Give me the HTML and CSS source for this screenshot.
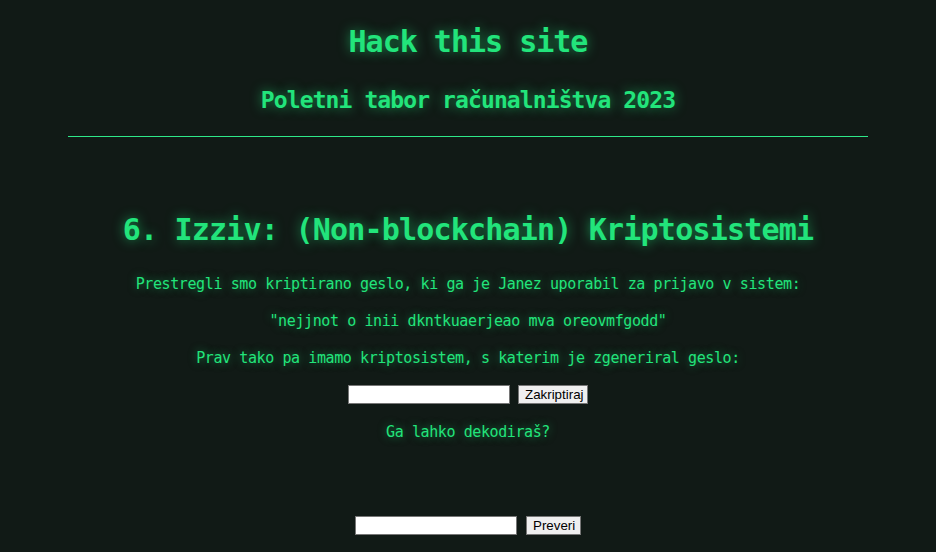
FILE: index.html
```html
<!DOCTYPE html>
<html lang="sl">
<head>
<meta charset="utf-8">
<title>Hack this site</title>
<link rel="stylesheet" href="styles.css">
</head>
<body>
<header class="site-header">
  <h1 class="site-title">Hack this site</h1>
  <h2 class="site-subtitle">Poletni tabor računalništva 2023</h2>
  <hr class="divider">
</header>
<main class="challenge">
  <h1 class="challenge-title">6. Izziv: (Non-blockchain) Kriptosistemi</h1>
  <p class="text">Prestregli smo kriptirano geslo, ki ga je Janez uporabil za prijavo v sistem:</p>
  <p class="text">"nejjnot o inii dkntkuaerjeao mva oreovmfgodd"</p>
  <p class="text">Prav tako pa imamo kriptosistem, s katerim je zgeneriral geslo:</p>
  <form class="row row-encrypt" onsubmit="return false">
    <input class="field" type="text">
    <button class="btn btn-encrypt" type="button">Zakriptiraj</button>
  </form>
  <p class="text">Ga lahko dekodiraš?</p>
  <form class="row row-check" onsubmit="return false">
    <input class="field" type="text">
    <button class="btn btn-check" type="button">Preveri</button>
  </form>
</main>
</body>
</html>
```
FILE: styles.css
```css
html, body {
  margin: 0;
  padding: 0;
}
body {
  background: #111a16;
  color: #22e47b;
  font-family: "DejaVu Sans Mono", "Liberation Mono", monospace;
  text-align: center;
  height: 552px;
  overflow: hidden;
}
.site-header {
  padding-top: 22px;
}
.site-title {
  margin: 0;
  font-size: 30px;
  line-height: 40px;
  letter-spacing: -1px;
  font-weight: bold;
  text-shadow: 0 0 12px rgba(34, 228, 123, 0.6);
}
.site-subtitle {
  margin: 23px 0 0;
  font-size: 23px;
  line-height: 30px;
  letter-spacing: -0.9px;
  font-weight: bold;
  text-shadow: 0 0 12px rgba(34, 228, 123, 0.6);
}
.divider {
  width: 800px;
  margin: 21px auto 0;
  border: 0;
  border-top: 1px solid #2ee889;
  height: 0;
}
.challenge {
  padding-top: 73px;
}
.challenge-title {
  margin: 0 0 24px;
  font-size: 30px;
  line-height: 40px;
  letter-spacing: -0.8px;
  font-weight: bold;
  text-shadow: 0 0 12px rgba(34, 228, 123, 0.6);
}
.text {
  margin: 16px 0;
  font-size: 15px;
  line-height: 21px;
  letter-spacing: -0.4px;
  text-shadow: 0 0 8px rgba(34, 228, 123, 0.5);
}
.challenge-title + .text {
  margin-top: 0;
}
.row {
  display: flex;
  justify-content: center;
  align-items: center;
  gap: 8px;
  margin: 0;
}
.row-encrypt {
  margin-top: 16px;
  margin-bottom: 18px;
}
.row-check {
  margin-top: 73px;
  gap: 9px;
}
.field {
  box-sizing: border-box;
  width: 162px;
  height: 19px;
  margin: 0;
  padding: 1px 2px;
  border: 1px solid #767676;
  background: #fff;
}
.btn {
  box-sizing: border-box;
  height: 19px;
  margin: 0;
  padding: 0 6px;
  border: 1px solid #767676;
  border-radius: 0;
  background: #efefef;
  color: #000;
  font-family: "Liberation Sans", Arial, sans-serif;
  font-size: 13.33px;
  line-height: 17px;
}
.btn-encrypt {
  width: 70px;
}
.btn-check {
  width: 55px;
}
```
